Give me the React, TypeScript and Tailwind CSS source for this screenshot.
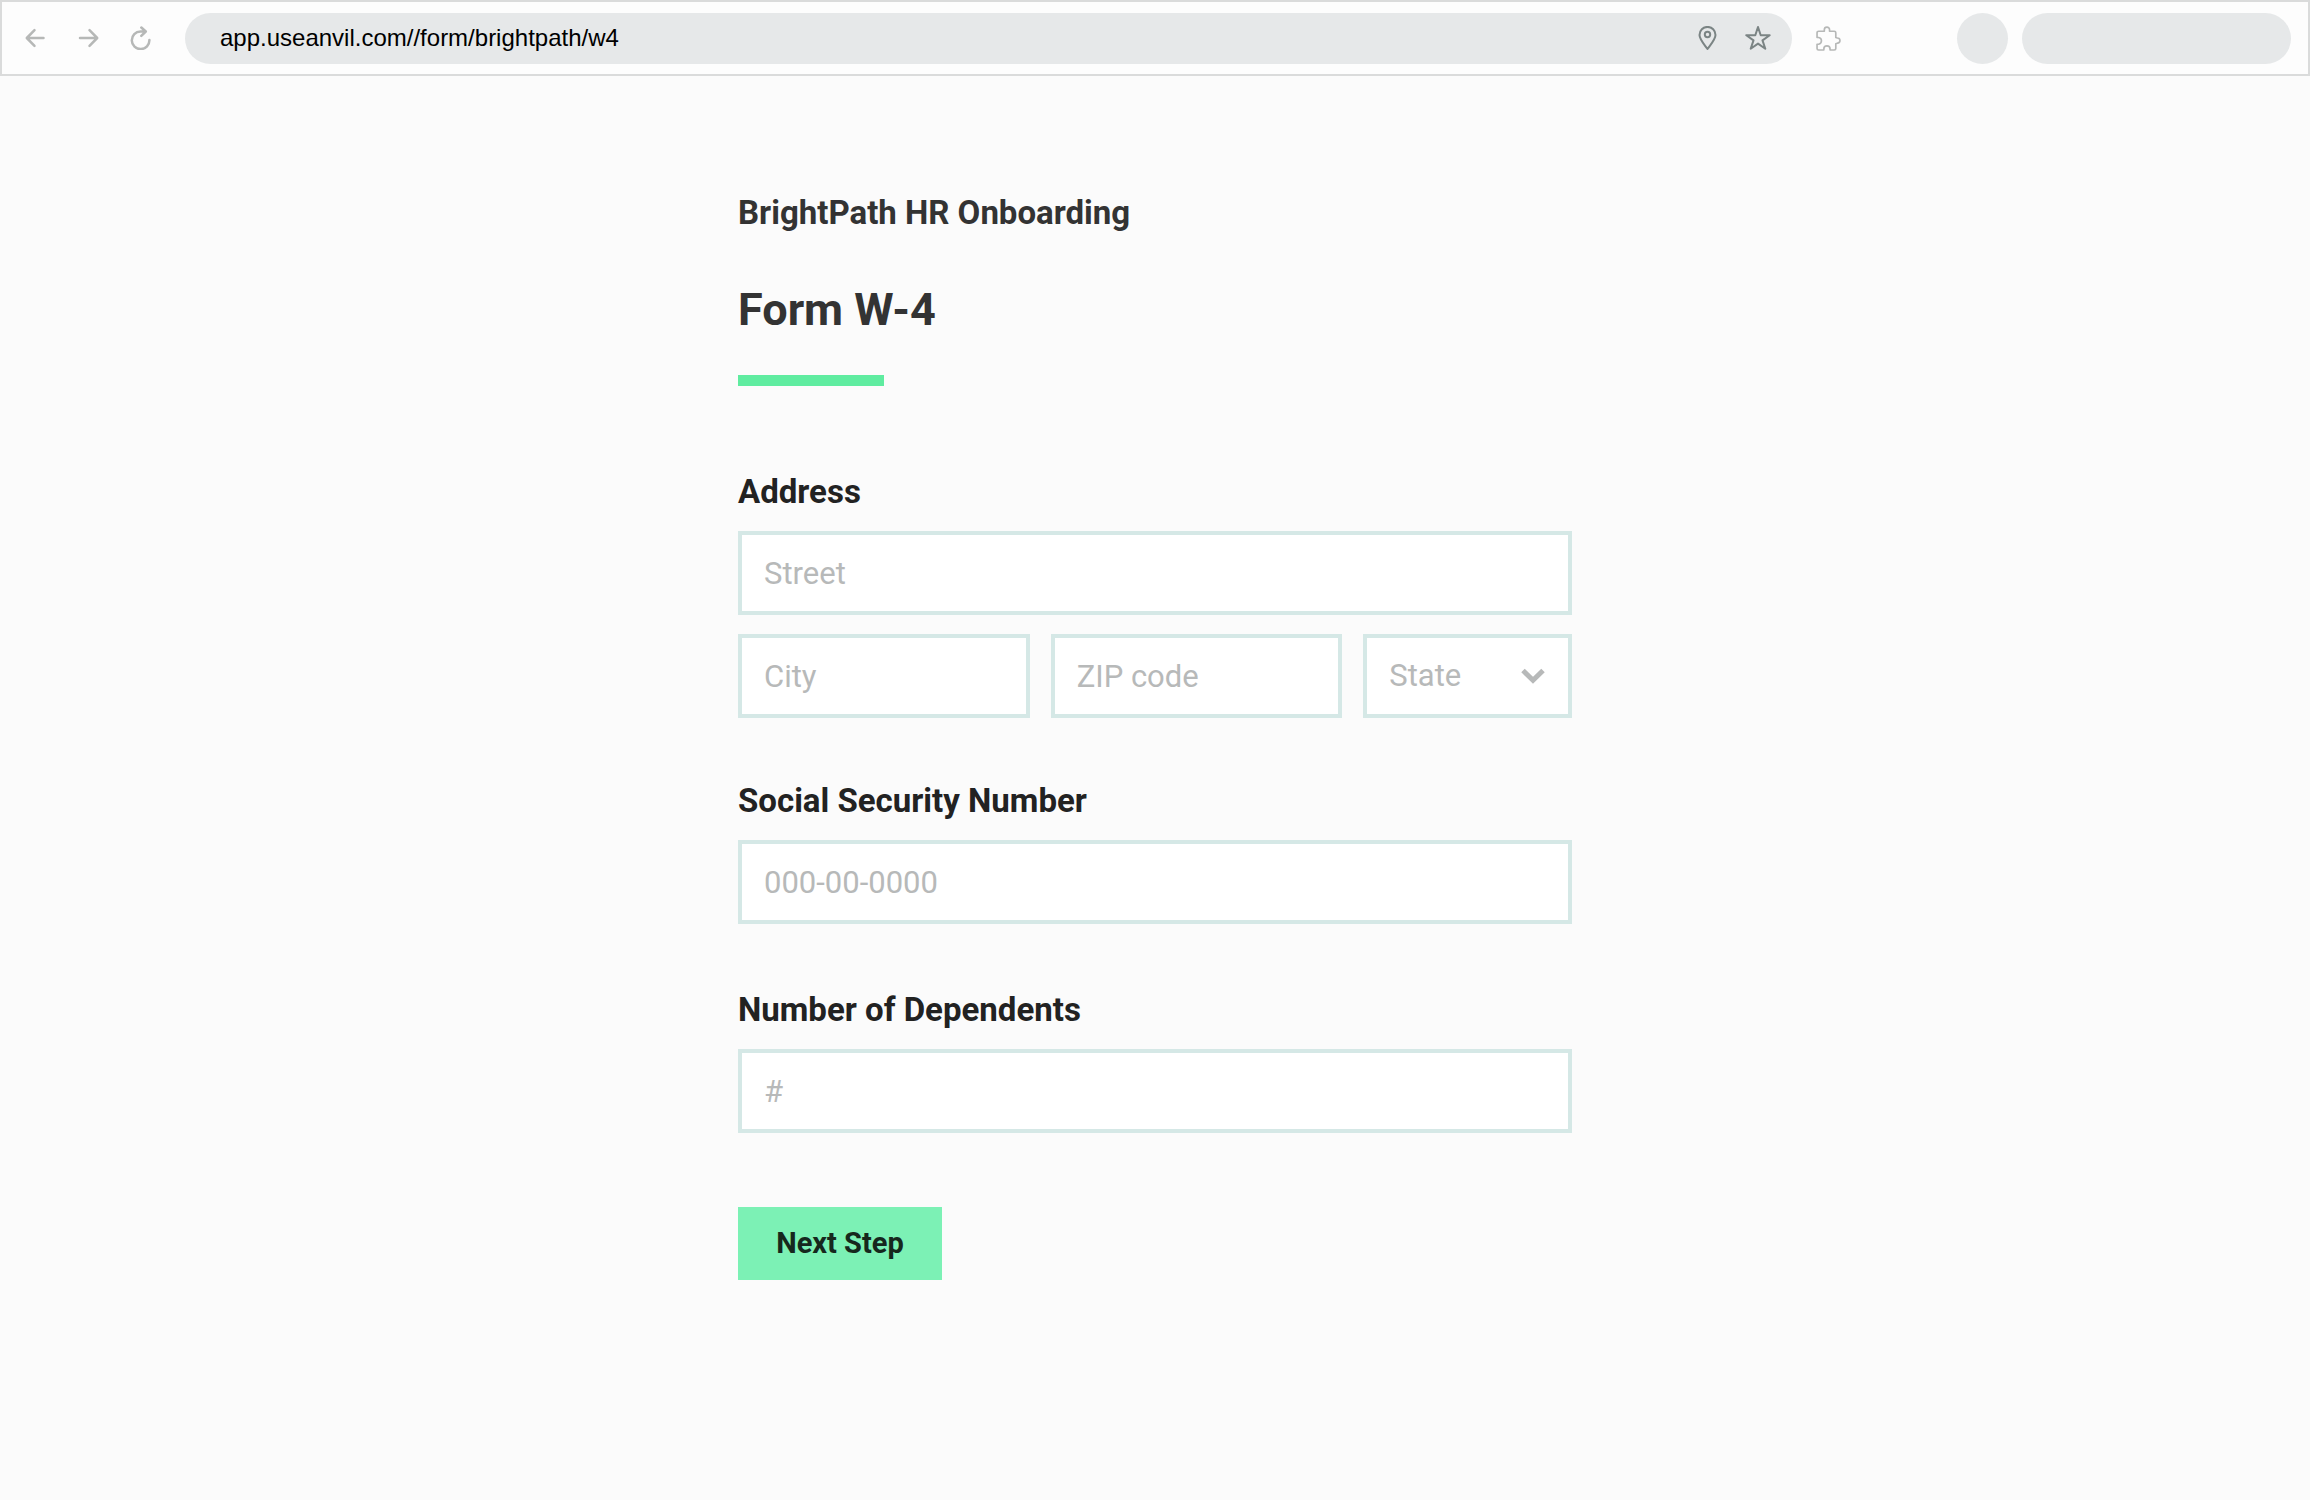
import type { ComponentProps, ReactNode } from 'react';
import clsx from 'clsx';

const FIELD =
  'block w-full h-[84px] min-w-0 border-4 border-[#d5e8e6] bg-white px-[22px] font-[inherit] text-[31px] text-[#222222] outline-none placeholder:text-[#b7b9b9] placeholder:opacity-100 focus:border-[#5feca0]';

function Stroke({ className, width, children }: { className: string; width: number; children: ReactNode }) {
  return (
    <svg
      viewBox="0 0 24 24"
      className={className}
      fill="none"
      stroke="currentColor"
      strokeWidth={width}
      strokeLinecap="round"
      strokeLinejoin="round"
      aria-hidden="true"
    >
      {children}
    </svg>
  );
}

function BrowserBar() {
  return (
    <header className="flex h-[76px] items-center border-2 border-[#dadbdb] bg-[#fdfdfd] pr-[17px] pl-[21px] text-[#b6b8b7]">
      <nav className="flex items-center gap-[29px]" aria-label="Browser">
        <button type="button" aria-label="Back">
          <Stroke className="size-6" width={2.5}>
            <path d="M20.500 12H4M11.500 4.200 3.800 12l7.700 7.800" />
          </Stroke>
        </button>
        <button type="button" aria-label="Forward">
          <Stroke className="size-6" width={2.5}>
            <path d="M4 12h17M13.500 4.200 21.200 12l-7.700 7.800" />
          </Stroke>
        </button>
        <button type="button" aria-label="Reload">
          <Stroke className="size-6" width={2.5}>
            <path d="M16.500 5.500H11.500A8.800 8.800 0 1 0 20.400 14M12.300 1.500l4.500 4-4.500 4.300" />
          </Stroke>
        </button>
      </nav>

      <div className="ml-8 flex h-[51px] min-w-0 flex-1 items-center gap-[26px] rounded-full bg-[#e6e8e9] pr-[21px] pl-[35px] text-[#7b8484]">
        <input
          aria-label="Address bar"
          defaultValue="app.useanvil.com//form/brightpath/w4"
          className="min-w-0 flex-1 bg-transparent font-['Liberation_Sans',Arial,sans-serif] text-2xl text-black outline-none"
        />
        <button type="button" aria-label="Location">
          <Stroke className="size-6" width={2}>
            <path d="M12.500 23C8.500 17.500 4.500 13 4.500 8.900a8 8 0 0 1 16 0C20.500 13 16.500 17.500 12.500 23Z" />
            <circle cx="12.500" cy="8.500" r="2.700" />
          </Stroke>
        </button>
        <button type="button" aria-label="Bookmark">
          <svg viewBox="0 0 26 26" className="size-[26px]" fill="none" stroke="currentColor" strokeWidth={2} strokeLinejoin="round" aria-hidden="true">
            <path d="m13 2 2.700 8.200h9l-7.200 5.200 2.800 8.300-7.300-5.100-7.300 5.100 2.800-8.300-7.200-5.200h9Z" />
          </svg>
        </button>
      </div>

      <button type="button" aria-label="Extensions" className="ml-6">
        <Stroke className="size-[25px]" width={1.6}>
          <path d="M1 6.500a1.500 1.500 0 0 1 1.500-1.500H8V3.500a2.500 2.500 0 0 1 5 0V5h4.500A1.500 1.500 0 0 1 19 6.500V11l1.500.5a2.500 2.500 0 0 1 0 5L19 17v4.500a1.500 1.500 0 0 1-1.500 1.500H13.500V22a3 3 0 0 0-6 0v1h-5A1.500 1.500 0 0 1 1 21.500v-4h1.500a3.300 3.300 0 0 0 0-6.500H1Z" />
        </Stroke>
      </button>
      <div className="ml-[116px] size-[51px] rounded-full bg-[#e6e8e9]" />
      <div className="ml-[14px] h-[51px] w-[269px] rounded-full bg-[#e6e8e9]" />
    </header>
  );
}

function TextField({ className, ...props }: ComponentProps<'input'>) {
  return <input type="text" className={clsx(FIELD, className)} {...props} />;
}

function Label({ htmlFor, children }: { htmlFor: string; children: ReactNode }) {
  return (
    <label htmlFor={htmlFor} className="block text-[33px] leading-10 font-bold text-[#222222]">
      {children}
    </label>
  );
}

function StateSelect() {
  return (
    <div className="relative">
      <select id="state" aria-label="State" defaultValue="" className={clsx(FIELD, 'appearance-none text-[#b7b9b9]')}>
        <option value="">State</option>
        <option value="CA">California</option>
        <option value="NY">New York</option>
        <option value="TX">Texas</option>
      </select>
      <svg
        viewBox="0 0 24 16"
        className="pointer-events-none absolute top-1/2 right-[27px] h-4 w-6 -translate-y-1/2"
        fill="none"
        stroke="#b7b9b9"
        strokeWidth={5}
        aria-hidden="true"
      >
        <path d="m2 2.500 10 9.700 10-9.700" />
      </svg>
    </div>
  );
}

export default function App() {
  return (
    <div className="min-h-screen bg-[#fbfbfb] font-[Roboto,'Liberation_Sans',sans-serif]">
      <BrowserBar />
      <main className="mx-auto w-full max-w-[834px] pt-[117px] pb-20">
        <p className="text-[33px] leading-10 font-bold text-[#333333]">BrightPath HR Onboarding</p>
        <h1 className="mt-[49px] text-[45px] leading-14 font-bold text-[#333333]">Form W-4</h1>
        <div className="mt-[37px] h-[11px] w-[146px] bg-[#5feca0]" />

        <form onSubmit={(e) => e.preventDefault()}>
          <div className="mt-[86px]">
            <Label htmlFor="street">Address</Label>
            <TextField id="street" placeholder="Street" className="mt-[19px]" />
            <div className="mt-[19px] grid grid-cols-[292fr_292fr_209fr] gap-[21px]">
              <TextField id="city" aria-label="City" placeholder="City" />
              <TextField id="zip" aria-label="ZIP code" placeholder="ZIP code" />
              <StateSelect />
            </div>
          </div>

          <div className="mt-[63px]">
            <Label htmlFor="ssn">Social Security Number</Label>
            <TextField id="ssn" placeholder="000-00-0000" className="mt-[19px]" />
          </div>

          <div className="mt-[66px]">
            <Label htmlFor="dependents">Number of Dependents</Label>
            <TextField id="dependents" inputMode="numeric" placeholder="#" className="mt-[19px]" />
          </div>

          <button type="submit" className="mt-[74px] h-[73px] w-[204px] bg-[#7cf1b5] text-[29px] font-bold text-[#16281d]">
            Next Step
          </button>
        </form>
      </main>
    </div>
  );
}
